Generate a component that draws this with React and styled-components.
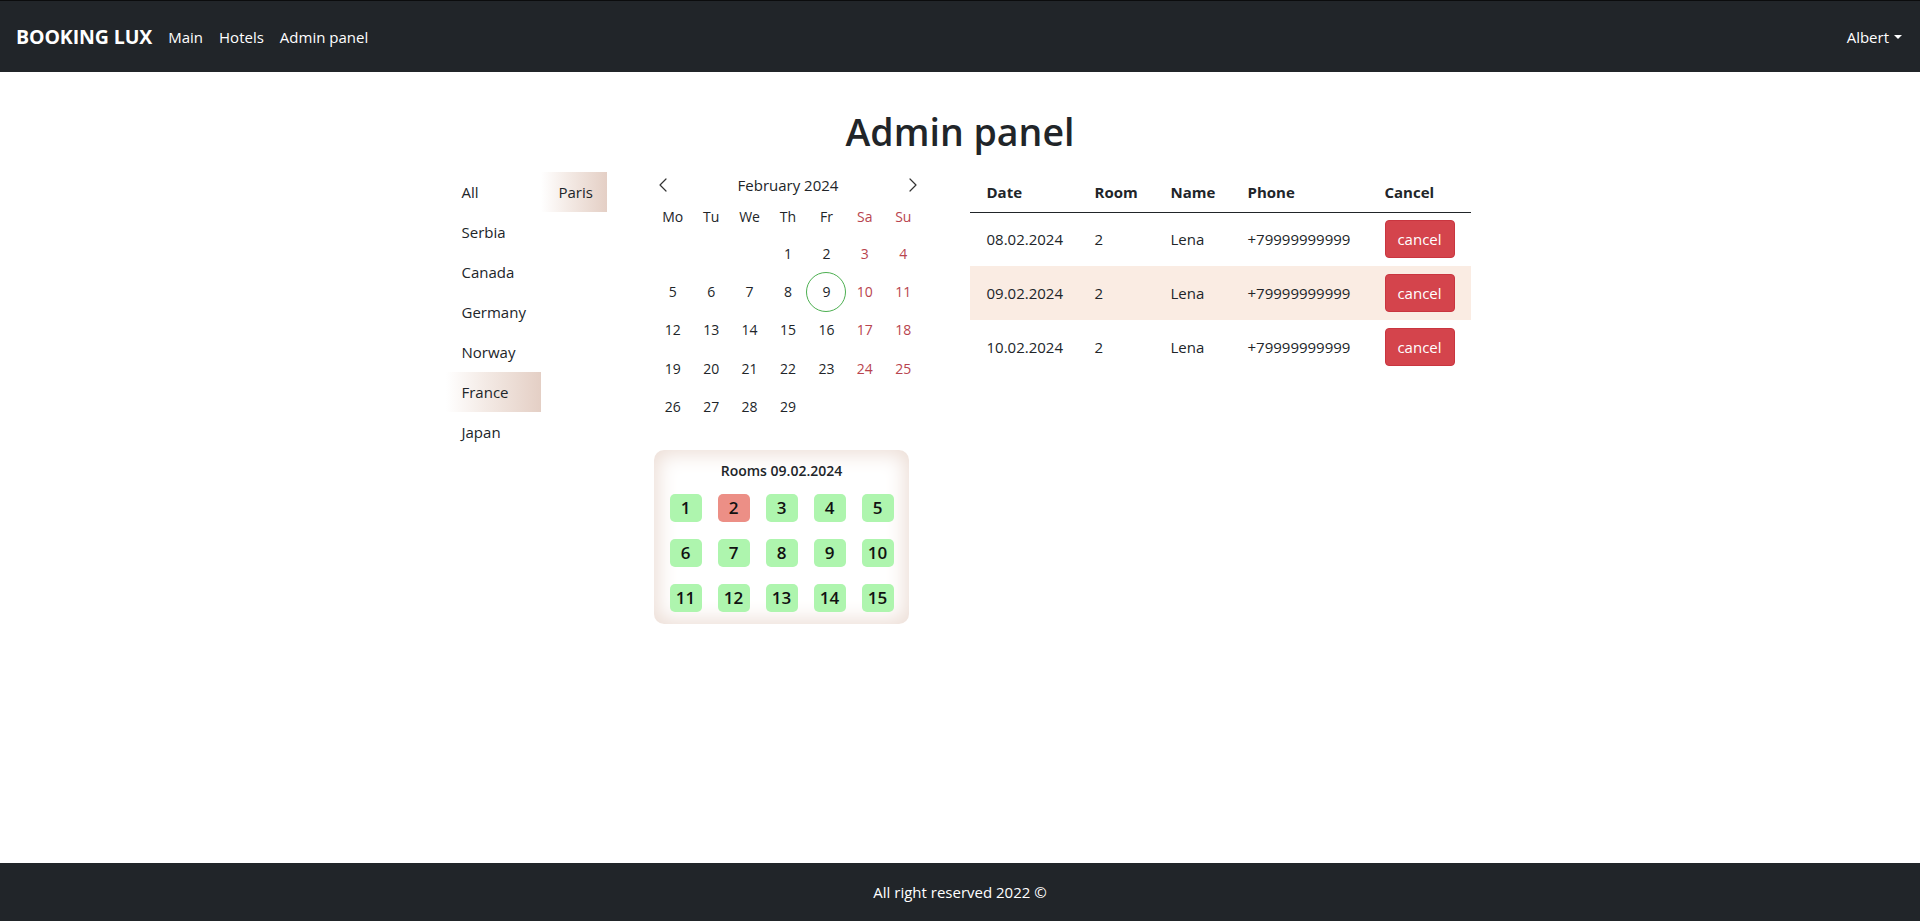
import React from "react";
import styled, { createGlobalStyle, css } from "styled-components";

const GlobalStyle = createGlobalStyle`
  html, body { margin: 0; padding: 0; }
  body {
    font-family: "Segoe UI", "Open Sans", "Noto Sans", sans-serif;
    color: #212529;
    background: #fff;
    font-size: 16px;
  }
  * { box-sizing: border-box; }
`;

const Page = styled.div`
  min-height: 100vh;
  display: flex;
  flex-direction: column;
`;

const Navbar = styled.nav`
  height: 72px;
  background: #212529;
  border-top: 1px solid #0b0c0d;
  display: flex;
  align-items: center;
  padding: 0 18px 0 16px;
`;

const Brand = styled.a`
  color: #fff;
  font-size: 19.5px;
  font-weight: 700;
  margin-right: 8px;
  letter-spacing: -0.1px;
`;

const NavLink = styled.a`
  color: #fff;
  font-size: 15px;
  padding: 0 8px;
`;

const Spacer = styled.div`
  flex: 1;
`;

const UserMenu = styled.div`
  color: #fff;
  font-size: 15px;
  display: flex;
  align-items: center;
  gap: 5px;
`;

const Caret = styled.span`
  width: 0;
  height: 0;
  border-left: 4px solid transparent;
  border-right: 4px solid transparent;
  border-top: 4px solid #fff;
  margin-top: 1px;
`;

const Main = styled.main`
  flex: 1;
  padding-top: 36px;
`;

const Title = styled.h1`
  margin: 0 0 16px;
  text-align: center;
  font-size: 37.5px;
  font-weight: 600;
  line-height: 48px;
`;

const Content = styled.div`
  display: flex;
  justify-content: center;
  align-items: flex-start;
  gap: 47px;
  padding-right: 4px;
`;

const Cities = styled.div`
  display: flex;
  align-items: flex-start;
`;

const List = styled.div`
  display: flex;
  flex-direction: column;
  width: ${(p) => p.$w}px;
`;

const activeBg = css`
  background: linear-gradient(to right, #ffffff 0%, #f4ebe6 40%, #e4cfc5 100%);
`;

const ListItem = styled.div`
  height: 40px;
  display: flex;
  align-items: center;
  padding-left: ${(p) => p.$pl}px;
  font-size: 15px;
  cursor: pointer;
  ${(p) => p.$active && activeBg}
`;

const CalendarCol = styled.div`
  width: 269px;
  display: flex;
  flex-direction: column;
`;

const CalHeader = styled.div`
  height: 26px;
  display: flex;
  align-items: center;
  justify-content: space-between;
  padding: 0 4px;
  font-size: 15px;
`;

const ArrowBtn = styled.button`
  background: none;
  border: 0;
  padding: 0;
  width: 10px;
  height: 16px;
  display: flex;
  align-items: center;
  justify-content: center;
  cursor: pointer;
`;

const Grid = styled.div`
  display: grid;
  grid-template-columns: repeat(7, minmax(0, 1fr));
`;

const WeekDay = styled.div`
  height: 36px;
  display: flex;
  align-items: center;
  justify-content: center;
  font-size: 14px;
  color: ${(p) => (p.$weekend ? "#b8444e" : "#212529")};
`;

const DayCell = styled.div`
  height: 38.4px;
  display: flex;
  align-items: center;
  justify-content: center;
  font-size: 14px;
  color: ${(p) => (p.$weekend ? "#b8444e" : "#212529")};
`;

const DayNum = styled.span`
  flex-shrink: 0;
  width: 40px;
  height: 40px;
  border-radius: 50%;
  display: flex;
  align-items: center;
  justify-content: center;
  border: 1px solid ${(p) => (p.$today ? "#4caf50" : "transparent")};
`;

const RoomsCard = styled.div`
  margin-top: 24px;
  width: 255px;
  border-radius: 10px;
  background: #fff;
  box-shadow: inset 0 0 20px 4px #ecddd5;
  padding: 10px 15px 12px 16px;
  display: flex;
  flex-direction: column;
  gap: 12px;
`;

const RoomsTitle = styled.div`
  text-align: center;
  font-size: 14px;
  font-weight: 600;
  line-height: 22px;
`;

const RoomsGrid = styled.div`
  display: grid;
  grid-template-columns: repeat(5, 32px);
  column-gap: 16px;
  row-gap: 17px;
`;

const Room = styled.div`
  height: 28px;
  border-radius: 5px;
  background: ${(p) => (p.$busy ? "#ec8f86" : "#aef5ae")};
  display: flex;
  align-items: center;
  justify-content: center;
  font-size: 17px;
  font-weight: 600;
  color: #111;
`;

const Table = styled.table`
  width: 501px;
  table-layout: fixed;
  border-collapse: collapse;
  font-size: 15px;
`;

const Th = styled.th`
  height: 40px;
  text-align: left;
  padding: 0 0 0 17px;
  font-weight: 700;
  border-bottom: 1px solid #212529;
  vertical-align: middle;
`;

const Tr = styled.tr`
  background: ${(p) => (p.$active ? "#faece3" : "transparent")};
`;

const Td = styled.td`
  height: 54px;
  padding: 0 0 0 17px;
  vertical-align: middle;
`;

const CancelButton = styled.button`
  width: 70px;
  height: 38px;
  border-radius: 4px;
  border: 1px solid #c9353f;
  background: #d4444c;
  color: #fff;
  font-family: inherit;
  font-size: 15px;
  padding: 0;
  cursor: pointer;
`;

const Footer = styled.footer`
  height: 58px;
  background: #212529;
  color: #fff;
  display: flex;
  align-items: center;
  justify-content: center;
  font-size: 15px;
`;

const countries = ["All", "Serbia", "Canada", "Germany", "Norway", "France", "Japan"];
const weekDays = ["Mo", "Tu", "We", "Th", "Fr", "Sa", "Su"];

function buildDays() {
  const cells = [];
  for (let i = 0; i < 3; i++) cells.push(null);
  for (let d = 1; d <= 29; d++) cells.push(d);
  return cells;
}

const bookings = [
  { date: "08.02.2024", room: 2, name: "Lena", phone: "+79999999999" },
  { date: "09.02.2024", room: 2, name: "Lena", phone: "+79999999999", active: true },
  { date: "10.02.2024", room: 2, name: "Lena", phone: "+79999999999" },
];

const Chevron = ({ dir }) => (
  <svg width="8" height="14" viewBox="0 0 8 14" fill="none">
    <path
      d={dir === "left" ? "M7 1 L1 7 L7 13" : "M1 1 L7 7 L1 13"}
      stroke="#333"
      strokeWidth="1.2"
      strokeLinecap="round"
      strokeLinejoin="round"
    />
  </svg>
);

export default function App() {
  const days = buildDays();
  return (
    <Page>
      <GlobalStyle />
      <Navbar>
        <Brand>BOOKING LUX</Brand>
        <NavLink>Main</NavLink>
        <NavLink>Hotels</NavLink>
        <NavLink>Admin panel</NavLink>
        <Spacer />
        <UserMenu>
          Albert
          <Caret />
        </UserMenu>
      </Navbar>
      <Main>
        <Title>Admin panel</Title>
        <Content>
          <Cities>
            <List $w={95}>
              {countries.map((c) => (
                <ListItem key={c} $pl={16} $active={c === "France"}>
                  {c}
                </ListItem>
              ))}
            </List>
            <List $w={66}>
              <ListItem $pl={18} $active>
                Paris
              </ListItem>
            </List>
          </Cities>
          <CalendarCol>
            <CalHeader>
              <ArrowBtn>
                <Chevron dir="left" />
              </ArrowBtn>
              <span>February 2024</span>
              <ArrowBtn>
                <Chevron dir="right" />
              </ArrowBtn>
            </CalHeader>
            <Grid>
              {weekDays.map((w, i) => (
                <WeekDay key={w} $weekend={i >= 5}>
                  {w}
                </WeekDay>
              ))}
              {days.map((d, i) => (
                <DayCell key={i} $weekend={i % 7 >= 5}>
                  {d && <DayNum $today={d === 9}>{d}</DayNum>}
                </DayCell>
              ))}
            </Grid>
            <RoomsCard>
              <RoomsTitle>Rooms 09.02.2024</RoomsTitle>
              <RoomsGrid>
                {Array.from({ length: 15 }, (_, i) => i + 1).map((n) => (
                  <Room key={n} $busy={n === 2}>
                    {n}
                  </Room>
                ))}
              </RoomsGrid>
            </RoomsCard>
          </CalendarCol>
          <Table>
            <colgroup>
              <col style={{ width: 108 }} />
              <col style={{ width: 76 }} />
              <col style={{ width: 77 }} />
              <col style={{ width: 137 }} />
              <col style={{ width: 103 }} />
            </colgroup>
            <thead>
              <tr>
                <Th>Date</Th>
                <Th>Room</Th>
                <Th>Name</Th>
                <Th>Phone</Th>
                <Th>Cancel</Th>
              </tr>
            </thead>
            <tbody>
              {bookings.map((b) => (
                <Tr key={b.date} $active={b.active}>
                  <Td>{b.date}</Td>
                  <Td>{b.room}</Td>
                  <Td>{b.name}</Td>
                  <Td>{b.phone}</Td>
                  <Td>
                    <CancelButton>cancel</CancelButton>
                  </Td>
                </Tr>
              ))}
            </tbody>
          </Table>
        </Content>
      </Main>
      <Footer>All right reserved 2022 ©</Footer>
    </Page>
  );
}
